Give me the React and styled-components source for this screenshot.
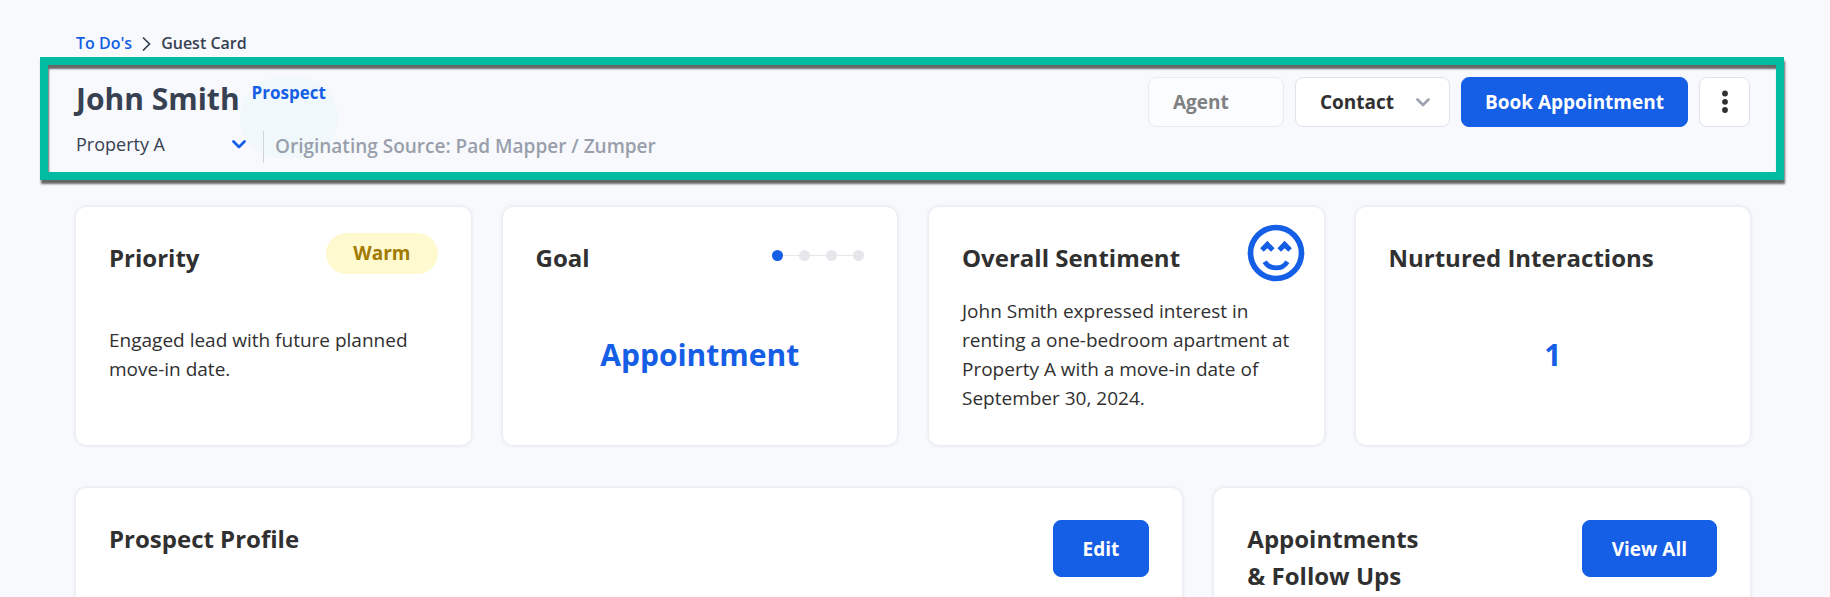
// App.jsx

import React, { useState } from "react";
import styled, { createGlobalStyle } from "styled-components";

const GlobalStyle = createGlobalStyle`
  *, *::before, *::after {
    box-sizing: border-box;
  }
  body {
    margin: 0;
    background: #f7f9fd;
    color: #303030;
    font-family: "Open Sans", "Noto Sans", sans-serif;
    font-size: 19px;
    overflow: hidden;
  }
  h1, h2, p {
    margin: 0;
  }
  button, select {
    font-family: inherit;
  }
`;

const Page = styled.main`
  padding: 31px 80px 0 76px;
`;

const Breadcrumb = styled.nav`
  display: flex;
  align-items: center;
  gap: 10px;
  margin-bottom: 2px;
  font-size: 16px;
  font-weight: 600;
  line-height: 24px;
  color: #374151;
`;

const BreadcrumbLink = styled.a`
  color: #155ee6;
  text-decoration: none;
`;

const GuestHeader = styled.header`
  display: flex;
  justify-content: space-between;
  margin: 0 -34px 27px -36px;
  padding: 12px 26px 9px 28px;
  border: 8px solid #02bca1;
  box-shadow: 1px 4px 2px #666, inset 1px 4px 2px #666;
`;

const NameRow = styled.div`
  display: flex;
  align-items: flex-start;
  gap: 12px;
`;

const GuestName = styled.h1`
  font-size: 30px;
  font-weight: 700;
  line-height: 44px;
  color: #374151;
`;

const StageTag = styled.span`
  position: relative;
  margin-top: 3px;
  font-size: 17px;
  font-weight: 700;
  line-height: 26px;
  color: #155ee6;

  &::before {
    content: "";
    position: absolute;
    z-index: -1;
    top: -3px;
    left: -12px;
    right: -12px;
    height: 81px;
    border-radius: 40px;
    background: #f0f8fb;
  }
`;

const DetailRow = styled.div`
  display: flex;
  align-items: flex-start;
  margin-top: 10px;
`;

const PropertyPicker = styled.label`
  display: grid;
  align-items: center;
  width: 170px;
  margin-right: 17px;

  select,
  svg {
    grid-area: 1 / 1;
  }
  svg {
    justify-self: end;
    color: #155ee6;
    pointer-events: none;
  }
`;

const PropertySelect = styled.select`
  appearance: none;
  padding: 0;
  border: none;
  background: transparent;
  font-size: 18px;
  line-height: 26px;
  color: #374151;
`;

const Source = styled.p`
  height: 32px;
  padding-left: 11px;
  border-left: 1px solid #d1d5db;
  font-size: 19px;
  font-weight: 600;
  line-height: 30px;
  color: #989fab;
`;

const Actions = styled.div`
  display: flex;
  align-items: flex-start;
  gap: 11px;
`;

const Button = styled.button`
  display: flex;
  align-items: center;
  justify-content: space-between;
  height: 50px;
  padding: 0 24px;
  border: 1px solid #dfe3e9;
  border-radius: 8px;
  background: #fff;
  color: #303030;
  font-size: 19px;
  font-weight: 700;
  white-space: nowrap;

  &:disabled {
    opacity: 0.6;
  }
`;

const AgentButton = styled(Button)`
  width: 136px;
`;

const ContactButton = styled(Button)`
  width: 155px;
  padding-right: 19px;

  svg {
    color: #9ca3af;
  }
`;

const MoreButton = styled(Button)`
  width: 51px;
  padding: 0;
  justify-content: center;
`;

const PrimaryButton = styled(Button)`
  flex-shrink: 0;
  height: ${(props) => (props.$tall ? "57px" : "50px")};
  padding: 0 ${(props) => (props.$tall ? "29px" : "23px")};
  border-color: #155ee6;
  background: #155ee6;
  color: #fff;
`;

const SummaryGrid = styled.section`
  display: grid;
  grid-template-columns: repeat(4, 1fr);
  gap: 32px;
  margin-bottom: 43px;
`;

const DetailGrid = styled.section`
  display: grid;
  grid-template-columns: 1fr 32%;
  gap: 32px;
`;

const StyledCard = styled.article`
  display: flex;
  flex-direction: column;
  padding: 32px 33px;
  border-radius: 10px;
  background: #fff;
  box-shadow: 0 0 4px rgba(30, 50, 80, 0.14);
`;

const CardHead = styled.div`
  display: flex;
  align-items: flex-start;
  justify-content: space-between;
`;

const CardTitle = styled.h2`
  font-size: 24px;
  font-weight: 700;
  line-height: 37px;
`;

const CardBody = styled.div`
  display: flex;
  flex: 1;
  flex-direction: column;
  justify-content: center;
  min-height: 116px;
  margin-top: 21px;
  line-height: 29px;
`;

const BigValue = styled.p`
  font-size: 30px;
  font-weight: 700;
  line-height: 42px;
  text-align: center;
  color: #155ee6;
`;

const Pill = styled.span`
  height: 41px;
  margin: -6px 0 -4px;
  padding: 0 27px;
  border-radius: 21px;
  background: #fff9cf;
  color: #a17a00;
  font-weight: 700;
  line-height: 41px;
`;

const Steps = styled.div`
  display: flex;
  align-items: center;
  margin-top: 11px;
`;

const StepDot = styled.span`
  width: 11px;
  height: 11px;
  border-radius: 50%;
  background: ${(props) => (props.$active ? "#155ee6" : "#e5e7eb")};
`;

const StepLine = styled.span`
  width: 16px;
  height: 1px;
  background: #e5e7eb;
`;

const FaceIcon = styled.svg`
  width: 68px;
  height: 68px;
  margin: -20px -19px;
  color: #155ee6;
`;

const ChevronDown = () => (
  <svg width="14" height="9" viewBox="0 0 14 9" fill="none" aria-hidden="true">
    <path
      d="M1.5 1.5 7 7l5.5-5.5"
      stroke="currentColor"
      strokeWidth="2.7"
      strokeLinecap="round"
      strokeLinejoin="round"
    />
  </svg>
);

const ChevronRight = () => (
  <svg width="9" height="15" viewBox="0 0 9 15" fill="none" aria-hidden="true">
    <path d="M1 1.5 7.5 8 1 14.5" stroke="currentColor" strokeWidth="1.7" />
  </svg>
);

const Dots = () => (
  <svg width="6" height="24" viewBox="0 0 6 24" fill="currentColor">
    <circle cx="3" cy="3.5" r="2.9" />
    <circle cx="3" cy="11.8" r="2.9" />
    <circle cx="3" cy="20" r="2.9" />
  </svg>
);

const HappyFace = () => (
  <FaceIcon viewBox="0 0 24 24" fill="none" role="img" aria-label="Happy">
    <circle cx="12" cy="12" r="9" stroke="currentColor" strokeWidth="2" />
    <path
      fill="currentColor"
      d="M8.95 7.7 6.4 10.35l1.25 1.25 1.3-1.3 1.3 1.3 1.25-1.25zM15.05 7.7l-2.55 2.65 1.25 1.25 1.3-1.3 1.3 1.3 1.25-1.25z"
    />
    <path
      d="M8 15.05a4.7 4.7 0 0 0 8 0"
      stroke="currentColor"
      strokeWidth="1.7"
    />
  </FaceIcon>
);

const StepProgress = ({ current, total }) => (
  <Steps role="img" aria-label={`Step ${current} of ${total}`}>
    {Array.from({ length: total }, (_, i) => (
      <React.Fragment key={i}>
        {i > 0 && <StepLine />}
        <StepDot $active={i + 1 === current} />
      </React.Fragment>
    ))}
  </Steps>
);

const Card = ({ title, aside, children }) => (
  <StyledCard>
    <CardHead>
      <CardTitle>{title}</CardTitle>
      {aside}
    </CardHead>
    <CardBody>{children}</CardBody>
  </StyledCard>
);

const App = () => {
  const [property, setProperty] = useState("Property A");

  return (
    <Page>
      <GlobalStyle />
      <Breadcrumb aria-label="Breadcrumb">
        <BreadcrumbLink href="#todos">To Do's</BreadcrumbLink>
        <ChevronRight />
        <span>Guest Card</span>
      </Breadcrumb>

      <GuestHeader>
        <div>
          <NameRow>
            <GuestName>John Smith</GuestName>
            <StageTag>Prospect</StageTag>
          </NameRow>
          <DetailRow>
            <PropertyPicker>
              <PropertySelect
                aria-label="Property"
                value={property}
                onChange={(e) => setProperty(e.target.value)}
              >
                <option>Property A</option>
              </PropertySelect>
              <ChevronDown />
            </PropertyPicker>
            <Source>Originating Source: Pad Mapper / Zumper</Source>
          </DetailRow>
        </div>
        <Actions>
          <AgentButton disabled>Agent</AgentButton>
          <ContactButton aria-haspopup="menu">
            Contact
            <ChevronDown />
          </ContactButton>
          <PrimaryButton>Book Appointment</PrimaryButton>
          <MoreButton aria-label="More actions">
            <Dots />
          </MoreButton>
        </Actions>
      </GuestHeader>

      <SummaryGrid>
        <Card title="Priority" aside={<Pill>Warm</Pill>}>
          <p>Engaged lead with future planned move-in date.</p>
        </Card>
        <Card title="Goal" aside={<StepProgress current={1} total={4} />}>
          <BigValue>Appointment</BigValue>
        </Card>
        <Card title="Overall Sentiment" aside={<HappyFace />}>
          <p>
            John Smith expressed interest in renting a one-bedroom apartment at
            Property A with a move-in date of September 30, 2024.
          </p>
        </Card>
        <Card title="Nurtured Interactions">
          <BigValue>1</BigValue>
        </Card>
      </SummaryGrid>

      <DetailGrid>
        <Card
          title="Prospect Profile"
          aside={<PrimaryButton $tall>Edit</PrimaryButton>}
        />
        <Card
          title={
            <>
              Appointments
              <br />& Follow Ups
            </>
          }
          aside={<PrimaryButton $tall>View All</PrimaryButton>}
        />
      </DetailGrid>
    </Page>
  );
};

export default App;
